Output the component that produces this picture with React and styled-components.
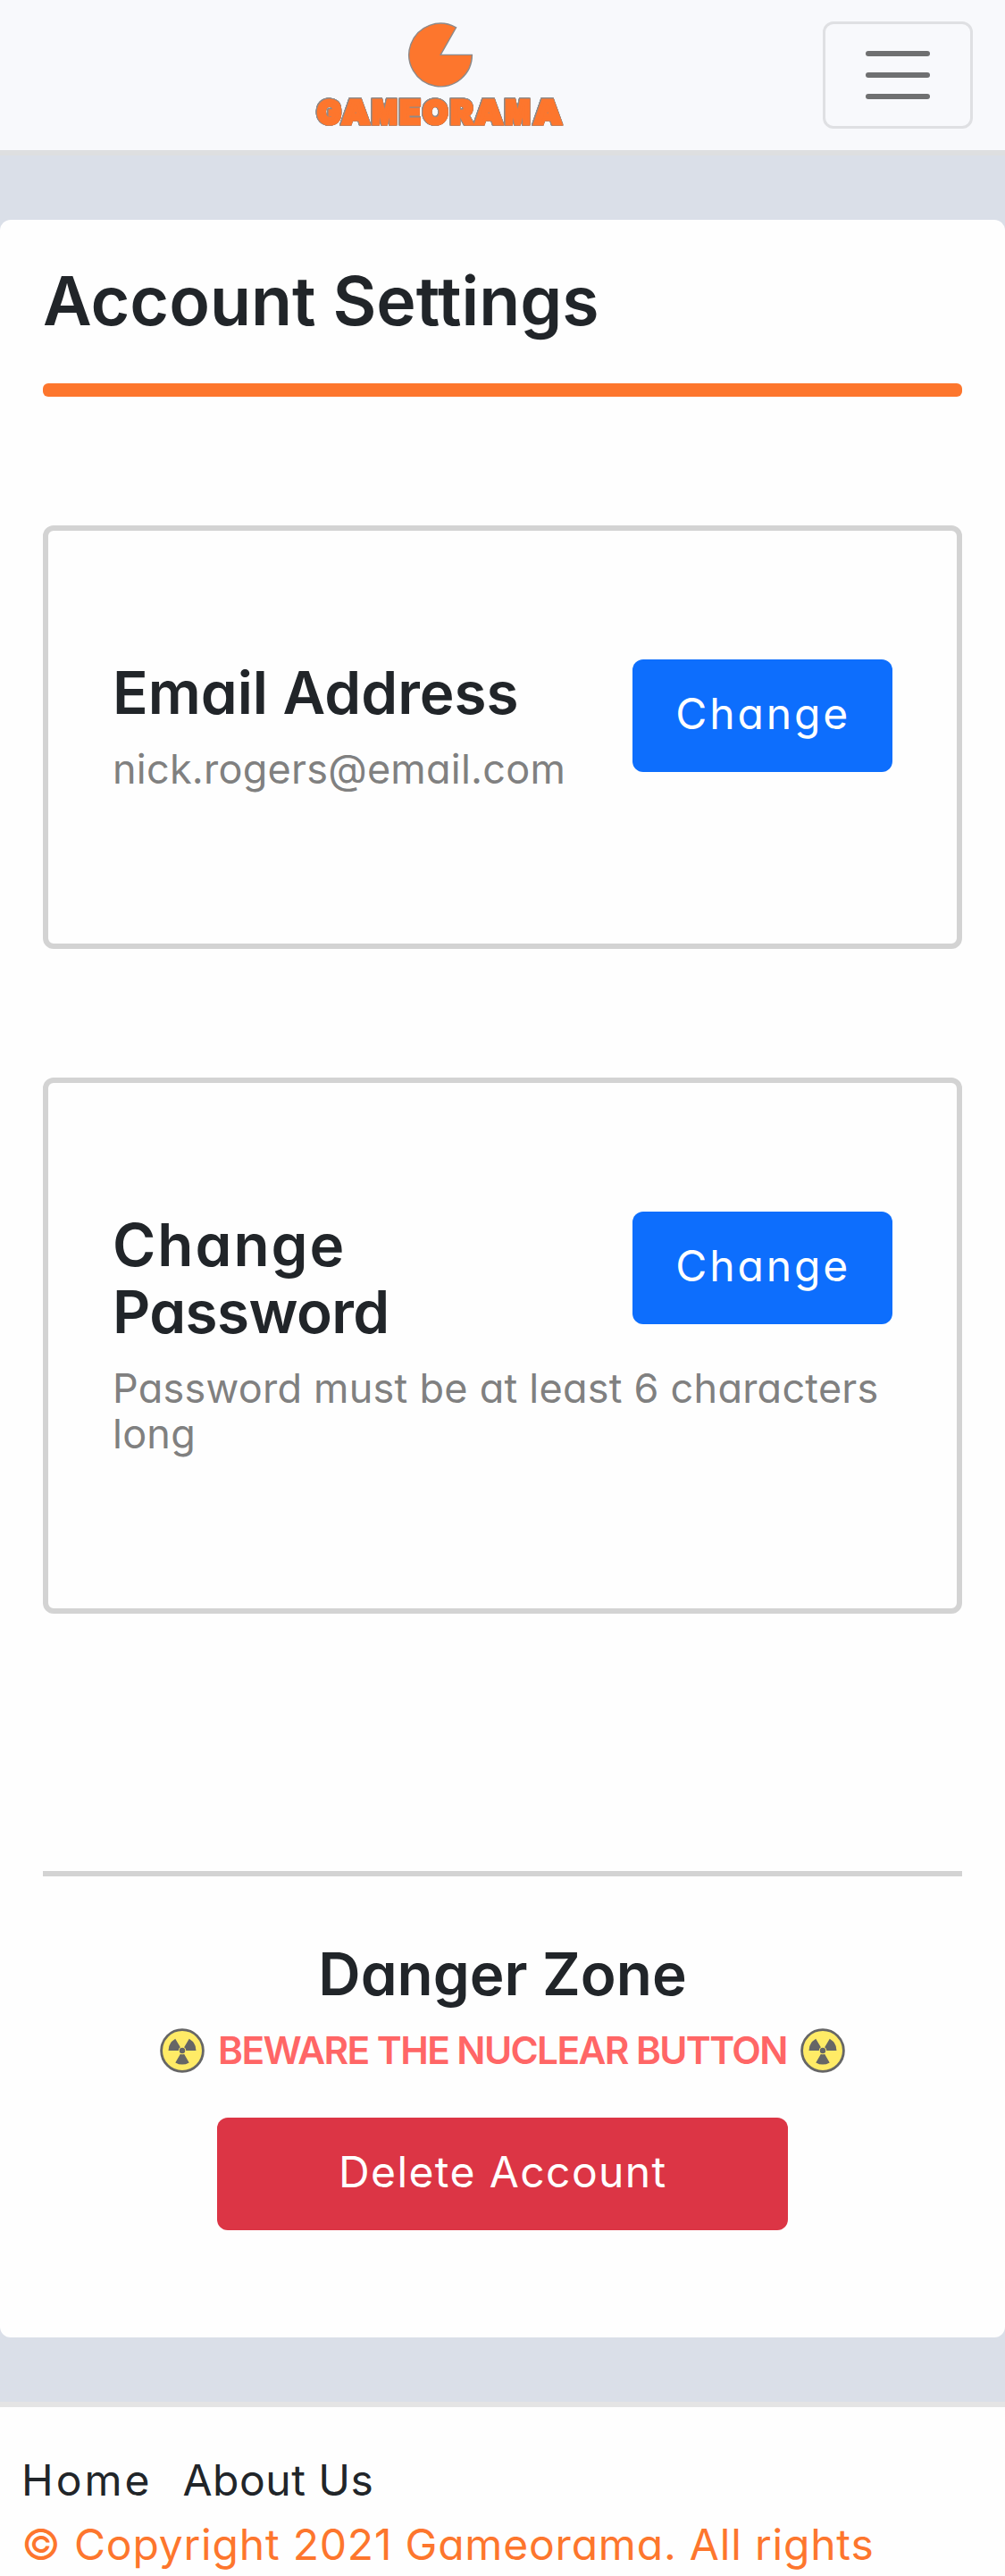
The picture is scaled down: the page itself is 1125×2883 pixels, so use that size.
import React from "react";
import styled, { createGlobalStyle } from "styled-components";

const GlobalStyle = createGlobalStyle`
  *, *::before, *::after { box-sizing: border-box; }
  body {
    margin: 0;
    background: #fefefe;
    color: #212529;
    font-family: Inter, "Open Sans", sans-serif;
    font-feature-settings: "cv11";
  }
  h1, h2, p { margin: 0; }
`;

const Page = styled.div`
  height: 2883px;
  overflow: hidden;
  background: #fefefe;
`;

const Header = styled.header`
  display: flex;
  justify-content: space-between;
  align-items: center;
  height: 174px;
  padding: 18px 36px 18px 345px;
  background: #f8f9fc;
  border-bottom: 6px solid #dedfe0;
`;

const LogoArt = styled.svg`
  display: block;
  width: 300px;
  height: 132px;
`;

const LogoMark = styled.path`
  fill: #fd762d;
  stroke: #8d8a8a;
  stroke-width: 1.4px;
`;

const Wordmark = styled.text`
  font-family: Inter, sans-serif;
  font-size: 37px;
  font-weight: 900;
  fill: #fd762d;
  stroke: #fd762d;
  stroke-width: 3.2px;
  filter: drop-shadow(0.6px 0 0 #8d8a8a) drop-shadow(-0.6px 0 0 #8d8a8a)
    drop-shadow(0 0.6px 0 #8d8a8a) drop-shadow(0 -0.6px 0 #8d8a8a);
`;

const MenuButton = styled.button`
  display: flex;
  flex-direction: column;
  align-items: center;
  justify-content: center;
  gap: 18px;
  width: 168px;
  height: 120px;
  padding: 0;
  background: transparent;
  border: 3px solid #dfe0e3;
  border-radius: 12px;
`;

const MenuLine = styled.span`
  width: 72px;
  height: 6px;
  border-radius: 3px;
  background: #6f7071;
`;

const Main = styled.main`
  padding: 72px 0;
  background: #dadfe8;
`;

const Panel = styled.section`
  height: 2370px;
  padding: 46px 48px 0;
  background: #fefefe;
  border-radius: 12px;
`;

const Title = styled.h1`
  font-size: 75.2px;
  font-weight: 600;
  line-height: 90px;
`;

const TitleRule = styled.div`
  height: 15px;
  margin-top: 47px;
  border-radius: 6px;
  background: #fd762d;
`;

const Setting = styled.section`
  margin-top: 144px;
  padding: 144px 72px 170px;
  border: 6px solid #d3d3d3;
  border-radius: 12px;
`;

const Heading = styled.h2`
  font-size: 65.6px;
  font-weight: 600;
  line-height: 75px;
`;

const Word = styled.span`
  letter-spacing: ${(p) => p.$track}px;
`;

const Hint = styled.p`
  margin-top: 22px;
  font-size: 45px;
  line-height: 51px;
  letter-spacing: 0.24px;
  color: #808080;
`;

const Button = styled.button`
  display: block;
  width: ${(p) => p.$width}px;
  height: 126px;
  padding: 0 0 5px ${(p) => p.$track / 2}px;
  border: 0;
  border-radius: 12px;
  background: ${(p) => p.$color};
  color: #fff;
  font: inherit;
  font-feature-settings: inherit;
  font-size: 48px;
  letter-spacing: ${(p) => p.$track}px;
`;

const ChangeButton = styled(Button)`
  float: right;
  margin-left: 24px;
`;

const Danger = styled.section`
  display: flex;
  flex-direction: column;
  align-items: center;
  margin-top: 288px;
  padding-top: 72px;
  border-top: 6px solid #d3d3d3;
`;

const Warning = styled.p`
  display: flex;
  align-items: center;
  gap: 15px;
  height: 51px;
  margin: 22px 0 50px;
  font-size: 42.4px;
  font-weight: 600;
  line-height: 51px;
  letter-spacing: -1.6px;
  white-space: nowrap;
  color: #ff6666;
`;

const HazardArt = styled.svg`
  display: block;
  width: 50px;
  height: 50px;
`;

const Footer = styled.footer`
  padding: 46px 24px 0;
  border-top: 6px solid #e4e4e4;
  font-size: 48px;
  line-height: 72px;
`;

const Links = styled.nav`
  display: flex;
  gap: 34px;
`;

const FooterLink = styled.a`
  color: #212529;
  text-decoration: none;
  letter-spacing: ${(p) => p.$track}px;
`;

const Copyright = styled.p`
  color: #fd762d;
  letter-spacing: 0.8px;
  white-space: nowrap;
`;

const letters = [
  ["G", 355, 27],
  ["A", 382.5, 31.5],
  ["M", 416.5, 28],
  ["E", 447.5, 23.5],
  ["O", 473.5, 28],
  ["R", 504.5, 25],
  ["A", 531.5, 31.5],
  ["M", 565.5, 28],
  ["A", 597.5, 31.5],
];

const Logo = () => (
  <LogoArt viewBox="345 18 300 132" role="img" aria-label="Gameorama">
    <LogoMark d="M493.2 61.4H528.4A35.3 35.3 0 1 1 510.6 30.8Z" />
    <Wordmark>
      {letters.map(([letter, x, width]) => (
        <tspan key={x} x={x} y="138.8" textLength={width} lengthAdjust="spacingAndGlyphs">
          {letter}
        </tspan>
      ))}
    </Wordmark>
  </LogoArt>
);

const Hazard = () => (
  <HazardArt viewBox="0 0 50 50" aria-hidden="true">
    <circle cx="25" cy="25" r="23.4" fill="#ffeb66" stroke="#666" strokeWidth="2.8" />
    {[0, 120, 240].map((angle) => (
      <path
        key={angle}
        transform={`rotate(${angle} 25 25)`}
        d="M22.9 28.7L17.3 38.4A15.5 15.5 0 0 0 32.7 38.4L27.1 28.7A4.3 4.3 0 0 1 22.9 28.7Z"
        fill="#666"
      />
    ))}
    <circle cx="25" cy="25" r="3.2" fill="#666" />
  </HazardArt>
);

export default function App() {
  return (
    <Page>
      <GlobalStyle />
      <Header>
        <Logo />
        <MenuButton aria-label="Toggle navigation">
          <MenuLine />
          <MenuLine />
          <MenuLine />
        </MenuButton>
      </Header>
      <Main>
        <Panel>
          <Title>Account Settings</Title>
          <TitleRule />
          <Setting>
            <ChangeButton $width={291} $color="#0d6efd" $track={2.9}>Change</ChangeButton>
            <Heading>Email Address</Heading>
            <Hint>nick.rogers@email.com</Hint>
          </Setting>
          <Setting>
            <ChangeButton $width={291} $color="#0d6efd" $track={2.9}>Change</ChangeButton>
            <Heading>
              <Word $track={2}>Change</Word> <Word $track={-0.6}>Password</Word>
            </Heading>
            <Hint>Password must be at least 6 characters long</Hint>
          </Setting>
          <Danger>
            <Heading>Danger Zone</Heading>
            <Warning>
              <Hazard />
              BEWARE THE NUCLEAR BUTTON
              <Hazard />
            </Warning>
            <Button $width={639} $color="#dc3545" $track={1.4}>Delete Account</Button>
          </Danger>
        </Panel>
      </Main>
      <Footer>
        <Links>
          <FooterLink $track={3}>Home</FooterLink>
          <FooterLink $track={0.5}>About Us</FooterLink>
        </Links>
        <Copyright>© Copyright 2021 Gameorama. All rights</Copyright>
      </Footer>
    </Page>
  );
}
